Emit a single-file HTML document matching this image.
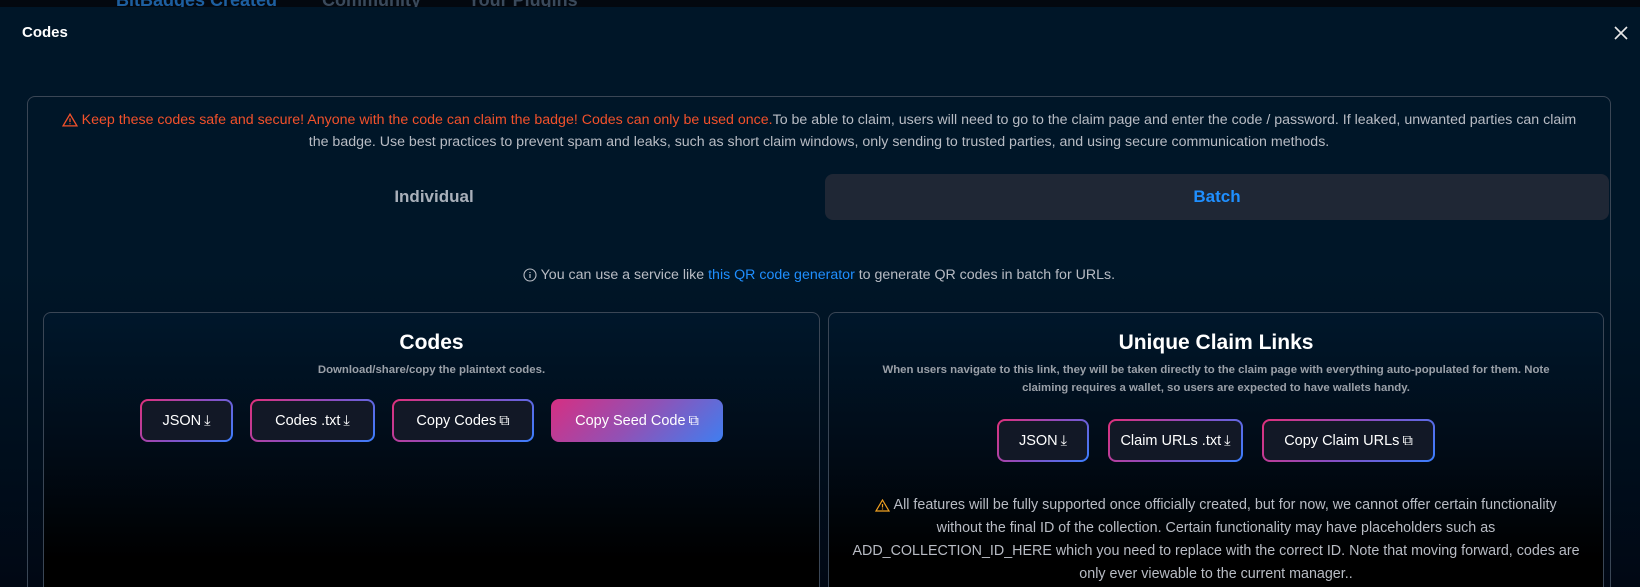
<!DOCTYPE html>
<html><head><meta charset="utf-8"><style>
*{box-sizing:border-box;margin:0;padding:0}
html,body{width:1640px;height:587px;overflow:hidden}
body{background:#020a14;font-family:"Liberation Sans",sans-serif;position:relative;color:#e6e6e6}
.top{position:absolute;left:0;top:0;width:1640px;height:7px;background:#03080f;overflow:hidden}
.top .t{position:absolute;top:-10px;font-size:18px;font-weight:bold;color:#3a4a5c}
.modal{position:absolute;left:0;top:7px;width:1640px;height:580px;overflow:hidden;background:linear-gradient(#001628 0%,#001628 45%,#00101f 70%,#010814 100%)}
.title{position:absolute;left:22px;top:17px;font-size:15px;font-weight:bold;color:#fff}
.close{position:absolute;left:1613px;top:18px;width:16px;height:16px}
.outer{position:absolute;left:27px;top:89px;width:1584px;height:520px;border:1px solid #3a4655;border-radius:8px}
.warn{position:absolute;left:0;top:12px;width:1582px;text-align:center;font-size:14.2px;line-height:22px;color:#b8bcc4;padding:0 26px}
.warn .r{color:#f2512b}
.tab{position:absolute;top:77px;height:46px;border-radius:8px;font-size:17px;font-weight:bold;text-align:center;line-height:46px}
.info{position:absolute;left:0;top:170px;width:1582px;text-align:center;font-size:14.2px;color:#b8bcc4}
.info a{color:#1f8fff;text-decoration:none}
.panel{position:absolute;top:215px;height:330px;border:1px solid #3a4655;border-radius:8px;background:linear-gradient(#00172b,#010c18 40%,#000 75%);text-align:center}
.panel h2{font-size:21px;font-weight:bold;color:#fff;margin-top:18px}
.panel p{font-size:11.4px;font-weight:bold;color:#9aa0a8;line-height:18px;margin-top:6px}
.btns{display:flex;justify-content:center}
.b{height:43px;padding:0 20px;border-radius:8px;font-size:14.5px;color:#fff;white-space:nowrap;border:2px solid transparent;background:linear-gradient(#121826,#121826) padding-box,linear-gradient(135deg,#e0307a,#8a4dc0,#3a7fff) border-box;display:flex;align-items:center;justify-content:center;gap:3px}
.b.f{background:linear-gradient(135deg,#d62f82,#9151b5 50%,#3f7ef0) border-box;border:none}
.ic{display:inline-block;vertical-align:middle}
.note{font-size:14.3px;color:#b8bcc4;line-height:23px;margin-top:32px;padding:0 22px}
</style></head><body>
<div class="top"><span class="t" style="left:116px;color:#1d5fa0">BitBadges Created</span><span class="t" style="left:322px">Community</span><span class="t" style="left:468px">Your Plugins</span></div>
<div class="modal">
<div class="title">Codes</div>
<svg class="close" viewBox="0 0 16 16"><path d="M2 2L14 14M14 2L2 14" stroke="#e8e8e8" stroke-width="1.6"/></svg>
<div class="outer">
<div class="warn"><span class="r"><svg class="ic" width="16" height="14" viewBox="0 0 15 13"><path d="M7.5 1L14 12H1Z" fill="none" stroke="#f2512b" stroke-width="1.2"/><path d="M7.5 5v3.5M7.5 9.5v1" stroke="#f2512b" stroke-width="1.2"/></svg> Keep these codes safe and secure! Anyone with the code can claim the badge! Codes can only be used once.</span>To be able to claim, users will need to go to the claim page and enter the code / password. If leaked, unwanted parties can claim the badge. Use best practices to prevent spam and leaks, such as short claim windows, only sending to trusted parties, and using secure communication methods.</div>
<div class="tab" style="left:16px;width:780px;color:#a9b0ba">Individual</div>
<div class="tab" style="left:797px;width:784px;background:#1f2735;color:#1f8fff">Batch</div>
<div class="info"><svg class="ic" width="14" height="14" viewBox="0 0 14 14"><circle cx="7" cy="7" r="6" fill="none" stroke="#b8bcc4" stroke-width="1.1"/><path d="M7 6v4M7 4v1" stroke="#b8bcc4" stroke-width="1.2"/></svg> You can use a service like <a>this QR code generator</a> to generate QR codes in batch for URLs.</div>
<div class="panel" style="left:15px;width:777px">
<h2>Codes</h2>
<p>Download/share/copy the plaintext codes.</p>
<div class="btns" style="margin-top:20px;gap:17px">
<div class="b" style="width:93px">JSON<span>⤓</span></div>
<div class="b" style="width:125px">Codes .txt<span>⤓</span></div>
<div class="b" style="width:142px">Copy Codes <span>⧉</span></div>
<div class="b f" style="width:172px">Copy Seed Code <span>⧉</span></div>
</div>
</div>
<div class="panel" style="left:800px;width:776px">
<h2>Unique Claim Links</h2>
<p>When users navigate to this link, they will be taken directly to the claim page with everything auto-populated for them. Note<br>claiming requires a wallet, so users are expected to have wallets handy.</p>
<div class="btns" style="margin-top:22px;gap:19px">
<div class="b" style="width:92px">JSON<span>⤓</span></div>
<div class="b" style="width:135px">Claim URLs .txt<span>⤓</span></div>
<div class="b" style="width:173px">Copy Claim URLs <span>⧉</span></div>
</div>
<div class="note"><svg class="ic" width="15" height="13" viewBox="0 0 15 13"><path d="M7.5 1L14 12H1Z" fill="none" stroke="#f0a020" stroke-width="1.2"/><path d="M7.5 5v3.5M7.5 9.5v1" stroke="#f0a020" stroke-width="1.2"/></svg> All features will be fully supported once officially created, but for now, we cannot offer certain functionality without the final ID of the collection. Certain functionality may have placeholders such as ADD_COLLECTION_ID_HERE which you need to replace with the correct ID. Note that moving forward, codes are only ever viewable to the current manager..</div>
</div>
</div>
</div>
</body></html>
